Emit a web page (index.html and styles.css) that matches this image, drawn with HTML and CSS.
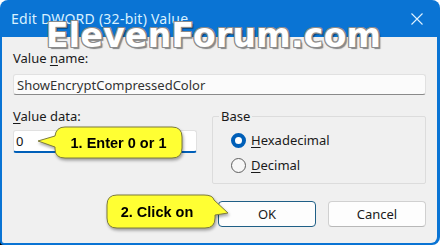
FILE: index.html
```html
<!DOCTYPE html>
<html>
<head>
<meta charset="utf-8">
<link rel="stylesheet" href="styles.css">
</head>
<body>
<div class="window">
  <div class="titlebar">
    <span class="title">Edit DWORD (32-bit) Value</span>
    <svg class="close" width="12" height="12" viewBox="0 0 12 12"><path d="M0.5 0.5 L11.5 11.5 M11.5 0.5 L0.5 11.5" stroke="#dff2ff" stroke-width="1.1" fill="none"/></svg>
  </div>
  <div class="client">
    <div class="label">Value <u>n</u>ame:</div>
    <div class="field name">ShowEncryptCompressedColor</div>
    <div class="row">
      <div class="datacol">
        <div class="label"><u>V</u>alue data:</div>
        <div class="field data">0</div>
      </div>
      <fieldset class="base">
        <legend>Base</legend>
        <div class="radios">
          <div class="radio"><span class="dot checked"></span><span><u>H</u>exadecimal</span></div>
          <div class="radio"><span class="dot"></span><span><u>D</u>ecimal</span></div>
        </div>
      </fieldset>
    </div>
    <div class="buttons">
      <div class="btn ok">OK</div>
      <div class="btn">Cancel</div>
    </div>
  </div>
  <div class="watermark">ElevenForum.com</div>
  <div class="callout c1">
    <svg class="bubble" width="150" height="37" viewBox="0 0 150 37"><path d="M29 2 H136 Q146 2 146 12 V23 Q146 33 136 33 H29 Q19 33 19 24 V22 L2 16 L19 11 Q20 2 29 2 Z" fill="#ffff33" stroke="#7d7b3c" stroke-width="1"/></svg>
    <span class="ctext">1. Enter 0 or 1</span>
  </div>
  <div class="callout c2">
    <svg class="bubble" width="126" height="38" viewBox="0 0 126 38"><path d="M12 2 H99 Q108 2 109 7 L123 20 L110 22 V25 Q110 35 100 35 H12 Q2 35 2 25 V12 Q2 2 12 2 Z" fill="#ffff33" stroke="#7d7b3c" stroke-width="1"/></svg>
    <span class="ctext">2. Click on</span>
  </div>
</div>
</body>
</html>
```
FILE: styles.css
```css
html {
  margin: 0;
  padding: 0;
  background: #ffffff;
}
body {
  margin: 0;
  padding: 0;
  width: 440px;
  height: 245px;
  overflow: hidden;
  background: linear-gradient(#000, #000) left bottom / 5px 5px no-repeat, #ffffff;
}
.window {
  position: relative;
  width: 440px;
  height: 245px;
  box-sizing: border-box;
  background: #0a74d4;
  border-radius: 8px 8px 8px 4px;
  display: flex;
  flex-direction: column;
  font-family: "Noto Sans", "DejaVu Sans", sans-serif;
  font-size: 13px;
  line-height: 16px;
  color: #1a1a1a;
}
.titlebar {
  height: 37px;
  flex: none;
  display: flex;
  align-items: center;
  justify-content: space-between;
  padding: 0 17px 0 11px;
}
.title {
  color: #d9f1ff;
  font-size: 14px;
  letter-spacing: 0.25px;
  padding-top: 1px;
}
.close {
  display: block;
}
.client {
  flex: 1;
  margin: 0 3px 2px 2px;
  background: #f0f0f0;
  padding: 13px 11px 0 11px;
  display: flex;
  flex-direction: column;
  border-radius: 0 0 6px 2px;
}
.label u, .radio u {
  text-decoration-thickness: 1px;
  text-underline-offset: 2px;
}
.field {
  box-sizing: border-box;
  background: #fbfbfb;
  border: 1px solid #e1e1e1;
  border-bottom-color: #8a8a8a;
  border-radius: 3px;
  padding: 0 3px;
  display: flex;
  align-items: center;
}
.field.name {
  margin-top: 8px;
  height: 21px;
  color: #333;
}
.row {
  margin-top: 13px;
  display: flex;
  align-items: flex-start;
  gap: 15px;
}
.datacol {
  width: 184px;
  display: flex;
  flex-direction: column;
}
.field.data {
  margin-top: 6px;
  height: 23px;
  background: #ffffff;
  border-bottom: 2px solid #005fb8;
  padding-left: 2px;
  color: #111;
}
.base {
  flex: 1;
  margin: 0;
  height: 76px;
  box-sizing: border-box;
  border: 1px solid #dcdcdc;
  border-radius: 2px;
  padding: 0 8px 9px 6px;
}
.base legend {
  padding: 0 2px;
}
.radios {
  margin: 8px 0 0 12px;
  display: flex;
  flex-direction: column;
  gap: 9px;
}
.radio {
  display: flex;
  align-items: center;
  gap: 5px;
  height: 16px;
}
.dot {
  box-sizing: border-box;
  width: 15px;
  height: 15px;
  border-radius: 50%;
  border: 1px solid #5f5f5f;
  background: #f7f7f7;
}
.dot.checked {
  border: 4.5px solid #005fb8;
  background: #ffffff;
}
.buttons {
  margin-top: 17px;
  display: flex;
  justify-content: flex-end;
  gap: 12px;
}
.btn {
  box-sizing: border-box;
  width: 98px;
  height: 26px;
  border: 1px solid #d0d0d0;
  border-bottom-color: #b8b8b8;
  border-radius: 4px;
  background: #fdfdfd;
  display: flex;
  align-items: center;
  justify-content: center;
  color: #1a1a1a;
}
.btn.ok {
  border: 1px solid #1f5f86;
}
.watermark {
  position: absolute;
  left: 46px;
  top: 17px;
  font-family: "DejaVu Sans", sans-serif;
  font-weight: bold;
  font-size: 33px;
  line-height: 38px;
  color: #ffffff;
  letter-spacing: 0.3px;
  text-shadow: -1px -1px 0 #8c8c8c, 1px -1px 0 #8c8c8c, -1px 1px 0 #8c8c8c, 1px 1px 0 #8c8c8c, 0 -1px 0 #8c8c8c, 0 1px 0 #8c8c8c, -1px 0 0 #8c8c8c, 1px 0 0 #8c8c8c, 2px 2px 1px rgba(0,0,0,0.45);
}
.callout {
  position: absolute;
  display: flex;
  align-items: center;
  justify-content: center;
  filter: drop-shadow(1px 2px 1.5px rgba(0,0,0,0.35));
}
.bubble {
  position: absolute;
  left: 0;
  top: 0;
}
.ctext {
  position: relative;
  font-family: "Liberation Sans", Arial, sans-serif;
  font-weight: bold;
  font-size: 14.5px;
  color: #000;
}
.c1 {
  left: 36px;
  top: 125px;
  width: 150px;
  height: 37px;
  box-sizing: border-box;
  padding: 0 4px 2px 19px;
}
.c2 {
  left: 105px;
  top: 193px;
  width: 126px;
  height: 38px;
  box-sizing: border-box;
  padding: 0 24px 0 2px;
}
```
